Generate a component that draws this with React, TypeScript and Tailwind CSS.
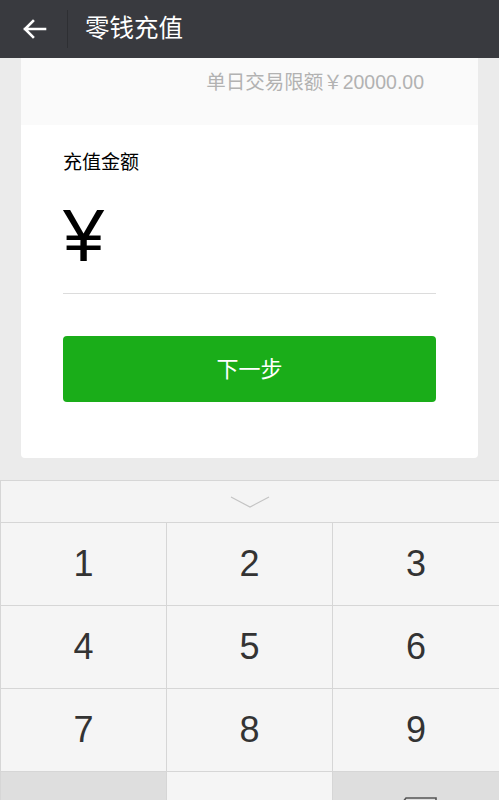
const font = "font-['Liberation_Sans','Noto_Sans_CJK_SC',sans-serif]";

const rows = [
  ["1", "2", "3"],
  ["4", "5", "6"],
  ["7", "8", "9"],
];

export default function App() {
  return (
    <div className={`h-[800px] w-[499px] overflow-hidden bg-[#ebebeb] ${font}`}>
      {/* header */}
      <div className="flex h-[58px] items-center bg-[#393a3f]">
        <div className="flex w-[67px] justify-center pl-[2px]">
          <svg width="26" height="22" viewBox="0 0 26 22" fill="none" stroke="white" strokeWidth="2.6" strokeLinecap="square">
            <path d="M3 11h20M11 3l-8 8 8 8" />
          </svg>
        </div>
        <div className="h-[38px] w-px bg-[#2e2f33]" />
        <span className="ml-[17px] text-[24.5px] leading-none text-white">零钱充值</span>
      </div>

      {/* card */}
      <div className="mx-[21px] overflow-hidden rounded-b-[4px] bg-white">
        <div className="flex h-[67px] justify-end bg-[#fafafa] pr-[54px] pt-[12px]">
          <span className="text-[19.5px] leading-[24px] text-[#b2b2b2]">单日交易限额￥20000.00</span>
        </div>
        <div className="h-[333px] px-[42px] pt-[26px]">
          <div className="text-[19px] leading-[24px] text-black">充值金额</div>
          <div className="mt-[21px] h-[80px] text-[74px] leading-[80px] text-black">¥</div>
          <div className="mt-[17px] h-px bg-[#dcdcdc]" />
          <button className="mt-[42px] flex h-[66px] w-full items-center justify-center rounded-[4px] bg-[#1aad19] text-[22px] text-white">
            下一步
          </button>
        </div>
      </div>

      {/* keyboard */}
      <div className="mt-[22px] border-l border-t border-[#d6d6d6] bg-[#f5f5f5]">
        <div className="flex h-[42px] items-center justify-center border-b border-[#d6d6d6] bg-[#f4f4f4]">
          <svg width="40" height="14" viewBox="0 0 40 14" fill="none" stroke="#c4c4c4" strokeWidth="1.2">
            <path d="M1 2l19 10 19-10" />
          </svg>
        </div>
        {rows.map((r) => (
          <div key={r[0]} className="grid h-[83px] grid-cols-[166px_166px_1fr] border-b border-[#d6d6d6]">
            {r.map((n, i) => (
              <div
                key={n}
                className={`flex items-center justify-center text-[36px] text-[#333] ${i < 2 ? "border-r border-[#d6d6d6]" : ""}`}
              >
                {n}
              </div>
            ))}
          </div>
        ))}
        <div className="grid h-[83px] grid-cols-[166px_166px_1fr]">
          <div className="border-r border-[#d6d6d6] bg-[#dedede]" />
          <div className="flex items-center justify-center border-r border-[#d6d6d6] text-[36px] text-[#333]">0</div>
          <div className="flex items-start justify-center bg-[#dedede] pt-[24px]">
            <svg width="44" height="30" viewBox="0 0 44 30" fill="none" stroke="#555" strokeWidth="1.6">
              <path d="M12 2h30v26H12L2 15z" />
              <path d="M22 9l12 12M34 9L22 21" />
            </svg>
          </div>
        </div>
      </div>
    </div>
  );
}
